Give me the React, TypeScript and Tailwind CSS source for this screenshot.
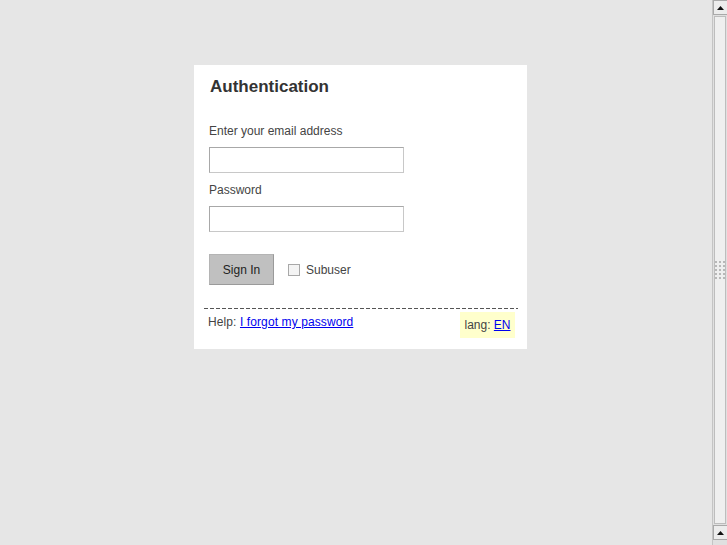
import React, { useState } from 'react';

const ScrollButton: React.FC = () => (
  <div className="h-[15px] w-[15px] shrink-0 border border-[#a9a9a9] bg-[#ececec] flex items-center justify-center">
    <svg width="7" height="4" viewBox="0 0 7 4">
      <polygon points="3.5,0 7,4 0,4" fill="#111" />
    </svg>
  </div>
);

const App: React.FC = () => {
  const [subuser, setSubuser] = useState(false);

  return (
    <div className="flex h-[545px] w-[727px] bg-[#e6e6e6] overflow-hidden font-['Liberation_Sans',Arial,sans-serif]">
      <main className="flex-1 pl-[194px] pt-[65px]">
        <div className="w-[333px] h-[284px] bg-white pl-[15px] pr-[9px] pt-[12px] flex flex-col">
          <h1 className="text-[17px] leading-[20px] font-bold text-[#333] pl-px">Authentication</h1>

          <label className="mt-[27px] text-[12px] leading-[14px] text-[#444]">Enter your email address</label>
          <input
            type="text"
            className="mt-[9px] w-[195px] h-[26px] border border-[#c8c8c8] border-t-[#a8a8a8] border-l-[#a8a8a8] bg-white outline-none px-1 text-[12px]"
          />

          <label className="mt-[10px] text-[12px] leading-[14px] text-[#444]">Password</label>
          <input
            type="password"
            className="mt-[9px] w-[195px] h-[26px] border border-[#c8c8c8] border-t-[#a8a8a8] border-l-[#a8a8a8] bg-white outline-none px-1 text-[12px]"
          />

          <div className="mt-[22px] flex items-center">
            <button className="w-[65px] h-[31px] bg-[#c0c0c0] border border-[#b4b4b4] border-b-[#9a9a9a] border-r-[#9a9a9a] text-[12px] text-[#222]">
              Sign In
            </button>
            <label className="ml-[14px] flex items-center gap-[6px] text-[12px] text-[#444] cursor-pointer">
              <span
                onClick={() => setSubuser(v => !v)}
                className="w-[12px] h-[12px] border border-[#a8a8a8] bg-[#f4f4f4] flex items-center justify-center text-[10px] leading-none"
              >
                {subuser ? '✓' : ''}
              </span>
              Subuser
            </label>
          </div>

          <div className="mt-[23px] -ml-[5px] w-[314px] h-px bg-[repeating-linear-gradient(to_right,#555_0_4px,transparent_4px_6px)]" />
          <div className="flex items-start justify-between -ml-[1px] w-[307px] mt-[3px]">
            <span className="text-[12px] leading-[14px] text-[#444] mt-[3px] tracking-[0.1px]">
              Help:{' '}
              <a href="#" className="text-[#0000ee] underline">I forgot my password</a>
            </span>
            <span className="bg-[#ffffcc] h-[26px] w-[55px] flex items-center justify-center text-[12px] text-[#444]">
              lang:&nbsp;<a href="#" className="text-[#0000ee] underline">EN</a>
            </span>
          </div>
        </div>
      </main>

      <aside className="w-[15px] h-full flex flex-col bg-[#e0e0e0] border-l border-[#c4c4c4]">
        <ScrollButton />
        <div className="flex-1 mx-px my-px bg-[#efefef] border border-[#bdbdbd] flex items-center justify-center">
          <div className="grid grid-cols-3 gap-[2px]">
            {Array.from({ length: 15 }).map((_, i) => (
              <span key={i} className="w-[2px] h-[2px] bg-[#b8b8b8]" />
            ))}
          </div>
        </div>
        <ScrollButton />
        <div className="h-[5px] shrink-0" />
      </aside>
    </div>
  );
};

export default App;
